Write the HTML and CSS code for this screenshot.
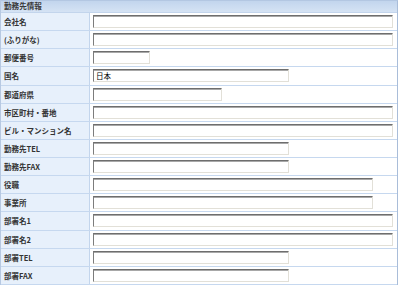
FILE: index.html
```html
<!DOCTYPE html>
<html lang="ja">
<head>
    <meta charset="UTF-8">
    <title>勤務先情報</title>
    <link rel="stylesheet" href="styles.css">
</head>
<body>
    <div class="panel">
        <div class="panel-head">勤務先情報</div>
        <div class="row"><div class="label">会社名</div><div class="field"><input type="text" class="w-full"></div></div>
        <div class="row"><div class="label">(ふりがな)</div><div class="field"><input type="text" class="w-full"></div></div>
        <div class="row"><div class="label">郵便番号</div><div class="field"><input type="text" class="w-zip"></div></div>
        <div class="row"><div class="label">国名</div><div class="field"><input type="text" class="w-mid" value="日本"></div></div>
        <div class="row"><div class="label">都道府県</div><div class="field"><input type="text" class="w-pref"></div></div>
        <div class="row"><div class="label">市区町村・番地</div><div class="field"><input type="text" class="w-full"></div></div>
        <div class="row"><div class="label">ビル・マンション名</div><div class="field"><input type="text" class="w-full"></div></div>
        <div class="row"><div class="label">勤務先TEL</div><div class="field"><input type="text" class="w-mid"></div></div>
        <div class="row"><div class="label">勤務先FAX</div><div class="field"><input type="text" class="w-mid"></div></div>
        <div class="row"><div class="label">役職</div><div class="field"><input type="text" class="w-long"></div></div>
        <div class="row"><div class="label">事業所</div><div class="field"><input type="text" class="w-long"></div></div>
        <div class="row"><div class="label">部署名1</div><div class="field"><input type="text" class="w-full"></div></div>
        <div class="row"><div class="label">部署名2</div><div class="field"><input type="text" class="w-full"></div></div>
        <div class="row"><div class="label">部署TEL</div><div class="field"><input type="text" class="w-mid"></div></div>
        <div class="row"><div class="label">部署FAX</div><div class="field"><input type="text" class="w-mid"></div></div>
    </div>
</body>
</html>
```

FILE: styles.css
```css
body {
    margin: 0;
    background-color: #ffffff;
    font-family: "Noto Sans CJK JP", "DejaVu Sans", sans-serif;
}
.panel {
    width: 398px;
    box-sizing: border-box;
    border-left: 1px solid #b7c9e2;
    border-right: 1px solid #a9bdd9;
    border-top: 1px solid #b3c7e2;
}
.panel-head {
    height: 11px;
    line-height: 10px;
    padding-left: 3px;
    font-size: 7.6px;
    font-weight: bold;
    color: #3a3a3a;
    background: linear-gradient(#c2d5ed, #d5e3f4);
    border-bottom: 1px solid #c3d5ec;
}
.row {
    display: flex;
    height: 18.14px;
    box-sizing: border-box;
    border-bottom: 1px solid #c6d8ef;
}
.label {
    width: 89px;
    flex-shrink: 0;
    box-sizing: border-box;
    padding-left: 3px;
    display: flex;
    align-items: center;
    background-color: #e7f0fb;
    border-right: 1px solid #c3d5ec;
    font-size: 7.5px;
    font-weight: bold;
    color: #333333;
    white-space: nowrap;
}
.field {
    flex: 1;
    display: flex;
    align-items: center;
    padding-left: 3px;
}
.field input {
    height: 13px;
    box-sizing: border-box;
    margin: 0;
    padding: 0 2px;
    border: 1px solid;
    border-color: #6e6e6e #e2e0d8 #e2e0d8 #7c7c7c;
    box-shadow: inset 0 1px 0 #a8a8a8;
    background-color: #ffffff;
    font-family: "Noto Sans CJK JP", "DejaVu Sans", sans-serif;
    font-size: 7.5px;
    color: #000000;
    outline: none;
}
.w-full { width: 300px; }
.w-long { width: 280px; }
.w-mid { width: 196px; }
.w-pref { width: 129px; }
.w-zip { width: 57px; }
```
